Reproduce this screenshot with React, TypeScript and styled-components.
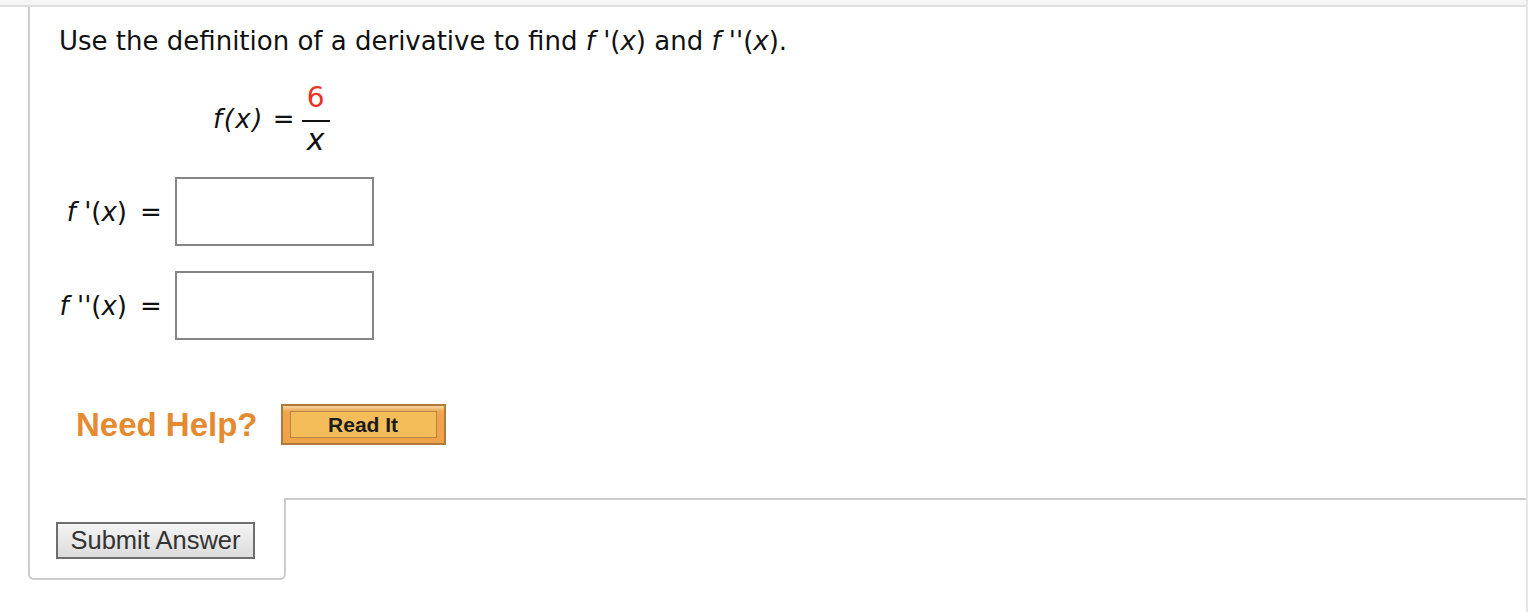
import React from "react";
import styled, { createGlobalStyle } from "styled-components";

const GlobalStyle = createGlobalStyle`
  html, body { margin: 0; padding: 0; background: #fff; }
  body { font-family: "DejaVu Sans", Verdana, sans-serif; color: #111; }
`;

const Page = styled.div`
  width: 1528px;
  min-height: 612px;
  box-sizing: border-box;
  border-right: 2px solid #e6e6e6;
  display: flex;
  flex-direction: column;
`;

const TopBand = styled.div`
  height: 5px;
  background: #f5f5f5;
  border-bottom: 2px solid #dedede;
`;

const Content = styled.div`
  padding-left: 28px;
  display: flex;
  flex-direction: column;
`;

const Card = styled.div`
  border-left: 2px solid #cccccc;
  padding: 19px 0 53px 29px;
  display: flex;
  flex-direction: column;
`;

const Title = styled.div`
  font-size: 26px;
  line-height: 30px;
`;

const Ital = styled.i`
  font-style: italic;
`;

const Formula = styled.div`
  display: flex;
  align-items: center;
  margin: 27px 0 0 154px;
  font-size: 26px;
`;

const FName = styled.i`
  font-style: italic;
  letter-spacing: 1.5px;
`;

const Eq = styled.span`
  margin: 0 7px 0 9px;
`;

const Fraction = styled.span`
  display: inline-flex;
  flex-direction: column;
  align-items: center;
  width: 28px;
`;

const Numer = styled.span`
  color: #ea3323;
  font-size: 28px;
  line-height: 30px;
`;

const Bar = styled.span`
  align-self: stretch;
  height: 2px;
  margin: 7px 0 4px;
  background: #111;
`;

const Denom = styled.span`
  font-size: 30px;
  line-height: 28px;
  font-style: italic;
`;

const AnswerGrid = styled.div`
  display: grid;
  grid-template-columns: 68px 48px 199px;
  row-gap: 25px;
  align-items: center;
  margin-top: 23px;
  font-size: 26px;
`;

const Label = styled.span`
  text-align: right;
  white-space: nowrap;
`;

const EqCell = styled.span`
  text-align: center;
`;

const AnswerBox = styled.input`
  box-sizing: border-box;
  width: 199px;
  height: 69px;
  border: 2px solid #858585;
  background: #fff;
  margin: 0;
  padding: 0;
`;

const HelpRow = styled.div`
  display: flex;
  align-items: center;
  margin: 64px 0 0 17px;
  gap: 23px;
`;

const NeedHelp = styled.span`
  font-family: "Liberation Sans", Arial, sans-serif;
  font-weight: bold;
  font-size: 33px;
  color: #e48a30;
`;

const ReadIt = styled.button`
  box-sizing: border-box;
  width: 165px;
  height: 41px;
  padding: 5px 7px;
  border: 2px solid #b07a3c;
  background: linear-gradient(#f8d3a0 0px, #f0a44c 6px, #f0a24a 100%);
  display: flex;
  cursor: pointer;
`;

const ReadItInner = styled.span`
  flex: 1;
  border: 1px solid #b58446;
  background: #f4bd5a;
  display: flex;
  align-items: center;
  justify-content: center;
  font-family: "Liberation Sans", Arial, sans-serif;
  font-weight: bold;
  font-size: 21px;
  color: #1c1c1c;
`;

const Footer = styled.div`
  display: flex;
`;

const SubmitCell = styled.div`
  box-sizing: border-box;
  width: 258px;
  border: 2px solid #cccccc;
  border-top: none;
  border-radius: 0 0 6px 6px;
  padding: 24px 0 19px 26px;
`;

const FooterRest = styled.div`
  flex: 1;
  border-top: 2px solid #cccccc;
  margin-left: -2px;
`;

const SubmitButton = styled.button`
  box-sizing: border-box;
  width: 199px;
  height: 37px;
  border: 2px solid #6e6e6e;
  background: linear-gradient(#f4f4f4, #dcdcdc);
  font-family: "Liberation Sans", Arial, sans-serif;
  font-size: 25.5px;
  color: #333;
  padding: 0;
  display: block;
  cursor: pointer;
`;

export default function App() {
  return (
    <>
      <GlobalStyle />
      <Page>
        <TopBand />
        <Content>
          <Card>
            <Title>
              Use the definition of a derivative to find <Ital>f</Ital> '(<Ital>x</Ital>) and{" "}
              <Ital>f</Ital> ''(<Ital>x</Ital>).
            </Title>
            <Formula>
              <FName>f(x)</FName>
              <Eq>=</Eq>
              <Fraction>
                <Numer>6</Numer>
                <Bar />
                <Denom>x</Denom>
              </Fraction>
            </Formula>
            <AnswerGrid>
              <Label>
                <Ital>f</Ital> '(<Ital>x</Ital>)
              </Label>
              <EqCell>=</EqCell>
              <AnswerBox type="text" aria-label="f prime of x" />
              <Label>
                <Ital>f</Ital> ''(<Ital>x</Ital>)
              </Label>
              <EqCell>=</EqCell>
              <AnswerBox type="text" aria-label="f double prime of x" />
            </AnswerGrid>
            <HelpRow>
              <NeedHelp>Need Help?</NeedHelp>
              <ReadIt type="button">
                <ReadItInner>Read It</ReadItInner>
              </ReadIt>
            </HelpRow>
          </Card>
          <Footer>
            <SubmitCell>
              <SubmitButton type="button">Submit Answer</SubmitButton>
            </SubmitCell>
            <FooterRest />
          </Footer>
        </Content>
      </Page>
    </>
  );
}
